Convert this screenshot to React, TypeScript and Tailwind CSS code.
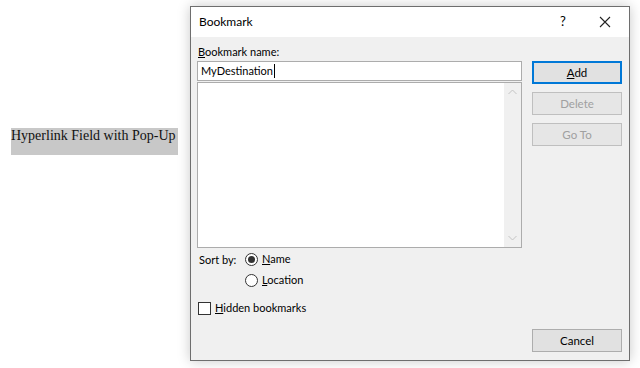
import { useState } from "react";

const ui = { fontFamily: 'Lato, "Noto Sans", sans-serif' };

const Btn = ({
  label,
  u,
  disabled,
  primary,
}: {
  label: string;
  u?: number;
  disabled?: boolean;
  primary?: boolean;
}) => (
  <div
    className={`h-[23px] w-[90px] flex items-center justify-center text-[11.5px] bg-[#e1e1e1] ${
      primary
        ? "border-2 border-[#0078d7]"
        : disabled
        ? "border border-[#bfbfbf] text-[#a0a0a0] bg-[#e6e6e6]"
        : "border border-[#adadad] text-black"
    }`}
  >
    {u === undefined ? (
      label
    ) : (
      <span>
        {label.slice(0, u)}
        <span className="underline">{label[u]}</span>
        {label.slice(u + 1)}
      </span>
    )}
  </div>
);

const Radio = ({ checked, children }: { checked?: boolean; children: React.ReactNode }) => (
  <div className="flex items-center gap-[4px] h-[21px]">
    <div className="w-[13px] h-[13px] rounded-full border border-[#333] bg-white flex items-center justify-center">
      {checked && <div className="w-[7px] h-[7px] rounded-full bg-[#333]" />}
    </div>
    <span>{children}</span>
  </div>
);

export default function App() {
  const [name] = useState("MyDestination");
  return (
    <div className="relative w-[640px] h-[368px] bg-white overflow-hidden">
      <div
        className="absolute left-[11px] top-[128px] w-[167px] h-[27px] bg-[#c8c8c8] text-[14px] text-[#111] leading-[16px]"
        style={{ fontFamily: '"Liberation Serif", serif' }}
      >
        Hyperlink Field with Pop-Up
      </div>

      <div
        className="absolute left-[190px] top-[6px] w-[440px] h-[355px] border border-[#6e6e6e] bg-[#f0f0f0] flex flex-col shadow-[0_0_12px_rgba(0,0,0,0.22)] text-[11px] text-black"
        style={ui}
      >
        <div className="h-[30px] bg-white flex items-center pl-[8px] shrink-0">
          <span className="flex-1 text-[12px]">Bookmark</span>
          <span className="w-[20px] text-center text-[13px] mr-[26px]">?</span>
          <svg width="12" height="12" viewBox="0 0 12 12" className="mr-[18px]">
            <path d="M1 1L11 11M11 1L1 11" stroke="#222" strokeWidth="1.1" />
          </svg>
        </div>

        <div className="flex-1 flex pl-[6px] pr-[7px] pb-[8px]">
          <div className="w-[325px] flex flex-col">
            <div className="mt-[7px] leading-[16px] pl-[1px]">
              <span className="underline">B</span>ookmark name:
            </div>
            <div className="mt-[1px] h-[20px] border border-[#acacac] bg-white flex items-center pl-[3px]">
              <span>{name}</span>
              <span className="w-[1px] h-[14px] bg-black ml-[1px]" />
            </div>
            <div className="mt-[1px] h-[166px] border border-[#acacac] bg-white flex">
              <div className="flex-1" />
              <div className="w-[17px] bg-[#f0f0f0] flex flex-col justify-between items-center py-[6px]">
                <svg width="9" height="6" viewBox="0 0 9 6">
                  <path d="M0.5 5L4.5 1L8.5 5" stroke="#c4c4c4" fill="none" />
                </svg>
                <svg width="9" height="6" viewBox="0 0 9 6">
                  <path d="M0.5 1L4.5 5L8.5 1" stroke="#c4c4c4" fill="none" />
                </svg>
              </div>
            </div>
            <div className="flex mt-[1px] pl-[2px]">
              <div className="w-[46px] leading-[21px]">Sort by:</div>
              <div className="flex flex-col">
                <Radio checked>
                  <span className="underline">N</span>ame
                </Radio>
                <Radio>
                  <span className="underline">L</span>ocation
                </Radio>
              </div>
            </div>
            <div className="flex items-center gap-[4px] mt-[9px] pl-[1px]">
              <div className="w-[13px] h-[13px] border border-[#333] bg-white" />
              <span>
                <span className="underline">H</span>idden bookmarks
              </span>
            </div>
          </div>
          <div className="ml-[10px] flex flex-col justify-between pt-[24px]">
            <div className="flex flex-col gap-[8px]">
              <Btn label="Add" u={0} primary />
              <Btn label="Delete" disabled />
              <Btn label="Go To" disabled />
            </div>
            <Btn label="Cancel" />
          </div>
        </div>
      </div>
    </div>
  );
}
